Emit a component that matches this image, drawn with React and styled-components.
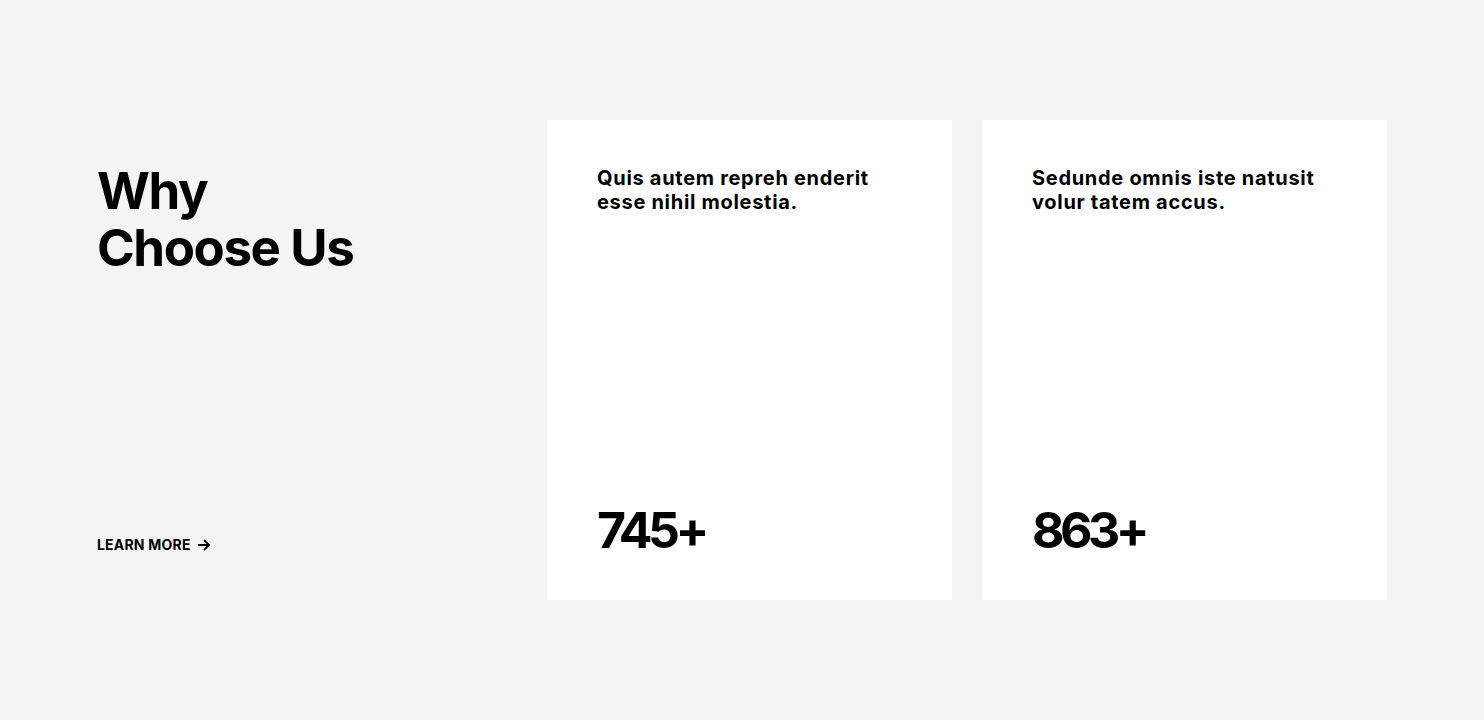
import React from 'react';
import styled, { createGlobalStyle } from 'styled-components';

const GlobalStyle = createGlobalStyle`
  * { box-sizing: border-box; }
  body {
    margin: 0;
    background: #f4f4f4;
    font-family: Inter, "Noto Sans", sans-serif;
    color: #000;
  }
`;

const Section = styled.section`
  padding: 120px 97px;
  height: 720px;
`;

const Row = styled.div`
  display: grid;
  grid-template-columns: 420px 405px 405px;
  column-gap: 30px;
  width: 1290px;
  height: 480px;
`;

const Intro = styled.div`
  display: flex;
  flex-direction: column;
  justify-content: space-between;
  padding: 42px 0 46px;
`;

const Title = styled.h2`
  margin: 0;
  font-size: 51px;
  line-height: 57px;
  font-weight: 700;
  letter-spacing: -1.4px;
`;

const MoreLink = styled.a`
  display: inline-flex;
  align-items: center;
  gap: 6px;
  font-size: 14px;
  font-weight: 700;
  text-transform: uppercase;
  color: #000;
  text-decoration: none;
  letter-spacing: 0.2px;
`;

const Card = styled.div`
  background: #fff;
  padding: 46px 50px 44px;
  display: flex;
  flex-direction: column;
  justify-content: space-between;
`;

const CardText = styled.p`
  margin: 0;
  font-size: 20px;
  line-height: 24px;
  font-weight: 700;
  letter-spacing: 0.7px;
`;

const Count = styled.div`
  font-size: 50px;
  line-height: 52px;
  font-weight: 700;
  letter-spacing: -4.5px;
`;

const Arrow = () => (
  <svg width="14" height="14" viewBox="0 0 24 24" fill="none" stroke="#000" strokeWidth="3.4" strokeLinecap="round" strokeLinejoin="round">
    <path d="M3 12h17" />
    <path d="M13 4.5l7.5 7.5-7.5 7.5" />
  </svg>
);

const stats = [
  { text: ['Quis autem repreh enderit', 'esse nihil molestia.'], count: '745+' },
  { text: ['Sedunde omnis iste natusit', 'volur tatem accus.'], count: '863+' },
];

export default function App() {
  return (
    <>
      <GlobalStyle />
      <Section>
        <Row>
          <Intro>
            <Title>
              Why
              <br />
              Choose Us
            </Title>
            <div>
              <MoreLink href="#">
                Learn More <Arrow />
              </MoreLink>
            </div>
          </Intro>
          {stats.map((s) => (
            <Card key={s.count}>
              <CardText>
                {s.text[0]}
                <br />
                {s.text[1]}
              </CardText>
              <Count>{s.count}</Count>
            </Card>
          ))}
        </Row>
      </Section>
    </>
  );
}
